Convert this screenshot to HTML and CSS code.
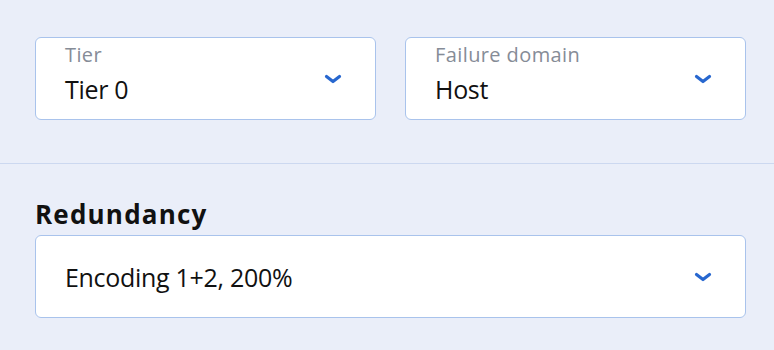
FILE: index.html
```html
<!DOCTYPE html>
<html lang="en">
<head>
  <meta charset="UTF-8" />
  <title>Storage policy</title>
  <link rel="stylesheet" href="styles.css">
</head>
<body>

<div class="panel">
  <div class="row">
    <div class="select">
      <div class="select-text">
        <span class="select-label">Tier</span>
        <span class="select-value">Tier 0</span>
      </div>
      <svg class="chevron" viewBox="0 0 18 10"><path d="M2.5 2.5 L9 7.5 L15.5 2.5" /></svg>
    </div>
    <div class="select">
      <div class="select-text">
        <span class="select-label">Failure domain</span>
        <span class="select-value">Host</span>
      </div>
      <svg class="chevron" viewBox="0 0 18 10"><path d="M2.5 2.5 L9 7.5 L15.5 2.5" /></svg>
    </div>
  </div>

  <div class="section">
    <h3>Redundancy</h3>
    <div class="select">
      <span class="select-value">Encoding 1+2, 200%</span>
      <svg class="chevron" viewBox="0 0 18 10"><path d="M2.5 2.5 L9 7.5 L15.5 2.5" /></svg>
    </div>
  </div>
</div>

</body>
</html>
```

FILE: styles.css
```css
body {
  margin: 0;
  font-family: "Open Sans", Arial, sans-serif;
  background: #eaeef9;
  color: #111;
}
.row {
  display: flex;
  gap: 29px;
  padding: 37px 28px 43px 35px;
  border-bottom: 1px solid #ccd8f0;
}
.select {
  flex: 1;
  height: 83px;
  box-sizing: border-box;
  background: white;
  border: 1px solid #a9c3ec;
  border-radius: 6px;
  display: flex;
  align-items: center;
  padding: 0 33px 0 29px;
}
.select-text {
  flex: 1;
  align-self: flex-start;
  display: flex;
  flex-direction: column;
  padding-top: 6px;
}
.select-label {
  font-size: 20px;
  line-height: 22px;
  letter-spacing: 0.4px;
  color: #868c97;
}
.select-value {
  flex: 1;
  font-size: 25px;
  line-height: 32px;
  letter-spacing: -0.3px;
}
.select-label + .select-value {
  margin-top: 7px;
}
.chevron {
  width: 18px;
  height: 10px;
  fill: none;
  stroke: #2767cf;
  stroke-width: 3.2;
  stroke-linecap: round;
  stroke-linejoin: round;
}
.section {
  padding: 34px 28px 0 35px;
}
.section h3 {
  margin: 0 0 5px;
  font-size: 26px;
  line-height: 32px;
  font-weight: 700;
  letter-spacing: 1.2px;
}
```
